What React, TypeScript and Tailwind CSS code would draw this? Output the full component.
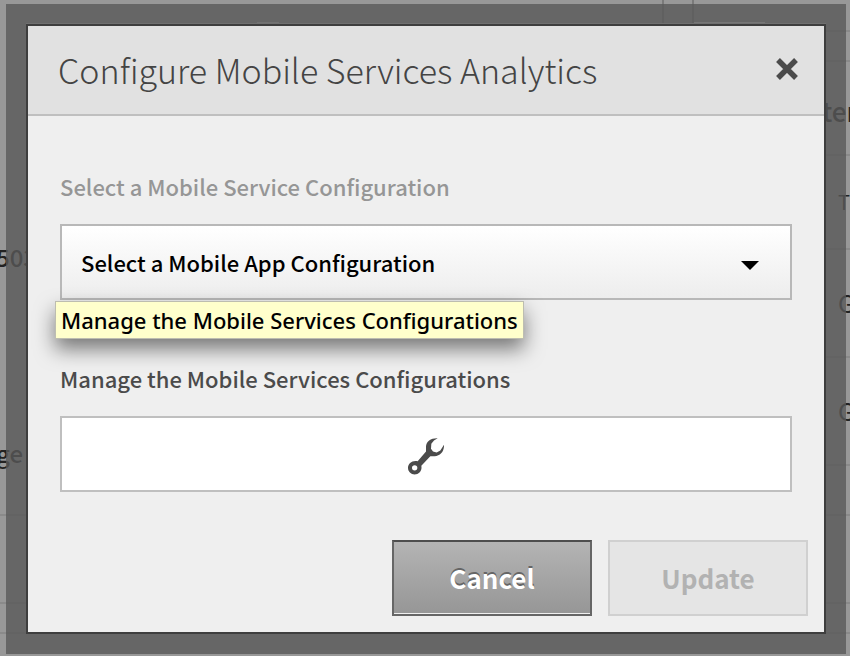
import type { ReactNode } from 'react';

const fontSans = "font-['Noto_Sans_CJK_SC','Open_Sans',sans-serif]";

const CloseIcon = () => (
  <svg viewBox="0 0 22 22" className="w-[22px] h-[22px]" aria-hidden="true">
    <path d="M2 2L20 20M20 2L2 20" stroke="#4b4b4b" strokeWidth="5.4" />
  </svg>
);

const WrenchIcon = () => (
  <svg viewBox="0 0 108 110" className="w-9 h-[37px]" aria-hidden="true">
    <path
      fill="#4b4b4b"
      fillRule="evenodd"
      d="M89 0C70 -1 54 9 54 26V40L29 69C13 65 0 76 0 89C0 101 9 109 20 109C33 109 43 98 40 83L67 54H80C97 54 109 40 108 20L97 37L86 43L75 40L69 32L70 17L78 7ZM20 81A8 8 0 1 1 20 97A8 8 0 1 1 20 81Z"
    />
  </svg>
);

const Row = ({
  className,
  children,
}: {
  className: string;
  children?: ReactNode;
}) => (
  <div
    className={`flex items-center border-b-2 border-[#8a8a8a] whitespace-nowrap ${className}`}
  >
    {children}
  </div>
);

const PageBehind = () => (
  <div
    className="[grid-area:1/1] flex justify-between overflow-hidden bg-[#989898] text-[#222] text-2xl"
    aria-hidden="true"
  >
    <div className="w-7 overflow-hidden">
      <div className="flex flex-col justify-end h-[516px] -ml-1 pb-[43px] gap-40 border-b-2 border-[#8a8a8a] leading-9">
        <div className="font-medium">503</div>
        <div className="font-medium">ge</div>
      </div>
      <Row className="h-[88px]" />
      <Row className="h-[30px]" />
    </div>
    <div className="grow flex justify-between h-6 pl-[229px] pr-[57px]">
      <div className="w-[22px] border-b-2 border-[#d0d0d0]" />
      <div className="flex">
        <div className="w-8 border-x-2 border-[#7a7a7a]" />
        <div className="w-[71px] border-b-2 border-[#e8e8e8]" />
      </div>
    </div>
    <div className="w-7 overflow-hidden">
      <Row className="h-8" />
      <Row className="h-[30px]" />
      <Row className="h-[94px] pt-1.5 text-[26px] font-medium">ter</Row>
      <Row className="h-[94px] pl-4 text-xl">T</Row>
      <Row className="h-[108px] pl-4">G</Row>
      <Row className="h-[108px] pl-4">G</Row>
      <Row className="h-[50px]" />
      <Row className="h-[88px]" />
      <Row className="h-[30px]" />
    </div>
  </div>
);

const ConfigureDialog = () => (
  <div
    role="dialog"
    aria-labelledby="dialogTitle"
    className="bg-[#efefef] border-2 border-[#3e3e3e] shadow-[0_-1px_0_#707070]"
  >
    <div className="flex items-center justify-between h-[90px] pl-[30px] pr-[26px] pb-0.5 bg-[#e1e1e1] border-b-2 border-[#bfbfbf]">
      <h1
        id="dialogTitle"
        className="text-[34px] leading-[48px] pt-0.5 font-light text-[#444] whitespace-nowrap"
      >
        Configure Mobile Services Analytics
      </h1>
      <button type="button" aria-label="Close">
        <CloseIcon />
      </button>
    </div>
    <div className="px-8 pt-[54px]">
      <label
        htmlFor="mobileApp"
        className="block mb-[22px] text-[22px] leading-8 font-medium text-[#969696]"
      >
        Select a Mobile Service Configuration
      </label>
      <div className="relative">
        <select
          id="mobileApp"
          className="block appearance-none w-full h-[76px] pl-[19px] text-[22px] font-medium text-black border-2 border-[#b8b8b8] bg-linear-to-b from-white to-[#ededed]"
        >
          <option>Select a Mobile App Configuration</option>
        </select>
        <svg
          viewBox="0 0 18 9"
          className="absolute right-[33px] top-[37px] w-[18px] h-[9px] pointer-events-none"
          aria-hidden="true"
        >
          <path d="M0 0H18L9 9Z" />
        </svg>
      </div>
      <div className="relative pt-[62px]">
        <div
          role="tooltip"
          className="absolute -left-[5px] top-px px-[5px] border border-[#bdbdb0] bg-[#ffffcc] font-['Noto_Sans',sans-serif] text-[22px] leading-9 font-medium text-black whitespace-nowrap shadow-[0_10px_20px_rgba(0,0,0,0.5)]"
        >
          Manage the Mobile Services Configurations
        </div>
        <label
          htmlFor="manage"
          className="block mb-[22px] text-[22px] leading-8 font-medium text-[#4b4b4b]"
        >
          Manage the Mobile Services Configurations
        </label>
        <button
          id="manage"
          type="button"
          className="flex items-center justify-center w-full h-[76px] pt-1 bg-white border-2 border-[#bfbfbf]"
        >
          <WrenchIcon />
        </button>
      </div>
    </div>
    <div className="flex justify-end gap-4 px-4 pt-12 pb-4 text-[26px] font-bold">
      <button
        type="button"
        className="w-[200px] h-[76px] pb-0.5 border-2 border-[#666] border-t-[#4e4e4e] bg-linear-to-b from-[#b4b4b4] to-[#969696] text-white [text-shadow:0_-2px_0_#666] shadow-[inset_0_-1px_0_#efefef]"
      >
        Cancel
      </button>
      <button
        type="button"
        disabled
        className="w-[200px] h-[76px] pb-0.5 border-2 border-[#d0d0d0] bg-[#e5e5e5] text-[#b2b2b2]"
      >
        Update
      </button>
    </div>
  </div>
);

const App = () => {
  return (
    <div className={`grid ${fontSans}`}>
      <PageBehind />
      <div className="[grid-area:1/1] z-10 mt-1 ml-1.5 mr-1 mb-0.5 p-5 bg-[#595959]/79">
        <ConfigureDialog />
      </div>
    </div>
  );
};

export default App;
